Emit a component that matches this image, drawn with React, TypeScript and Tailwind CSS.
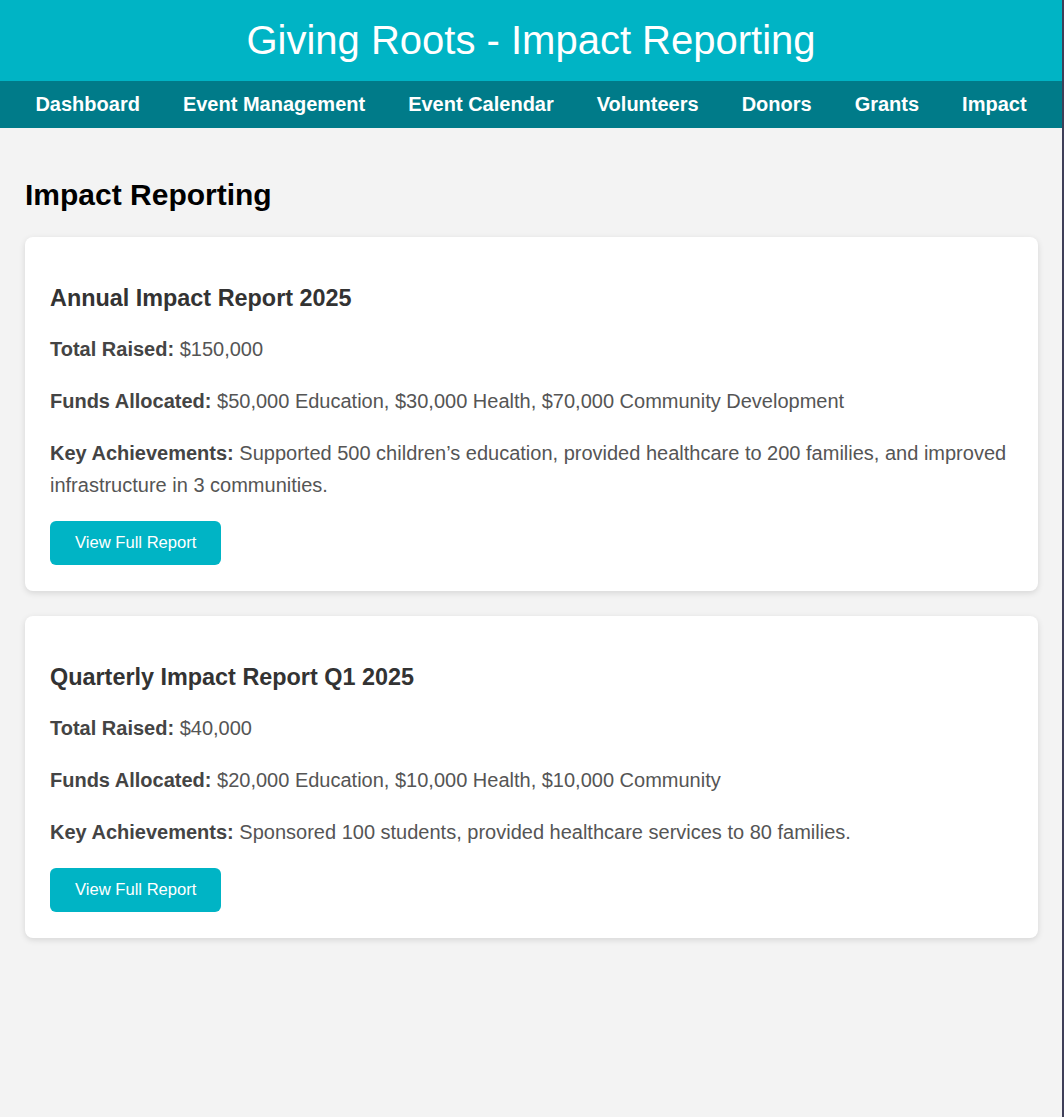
import React from "react";

const navItems = ["Dashboard", "Event Management", "Event Calendar", "Volunteers", "Donors", "Grants", "Impact"];

type Report = {
  title: string;
  raised: string;
  funds: string;
  achievements: string;
};

const reports: Report[] = [
  {
    title: "Annual Impact Report 2025",
    raised: "$150,000",
    funds: "$50,000 Education, $30,000 Health, $70,000 Community Development",
    achievements:
      "Supported 500 children\u2019s education, provided healthcare to 200 families, and improved infrastructure in 3 communities.",
  },
  {
    title: "Quarterly Impact Report Q1 2025",
    raised: "$40,000",
    funds: "$20,000 Education, $10,000 Health, $10,000 Community",
    achievements: "Sponsored 100 students, provided healthcare services to 80 families.",
  },
];

function ReportCard({ r }: { r: Report }) {
  return (
    <div className="bg-white rounded-[8px] shadow-[0_2px_6px_rgba(0,0,0,0.12)] px-[25px] pt-[43px] pb-[26px]">
      <h3 className="text-[23.4px] leading-[37px] font-bold text-[#333333]">{r.title}</h3>
      <div className="mt-[16px] flex flex-col gap-[20px] text-[20px] leading-[32px] text-[#555555]">
        <p>
          <strong className="text-[#444444]">Total Raised:</strong>
          <span> {r.raised}</span>
        </p>
        <p>
          <strong className="text-[#444444]">Funds Allocated:</strong>
          <span> {r.funds}</span>
        </p>
        <p>
          <strong className="text-[#444444]">Key Achievements:</strong>
          <span> {r.achievements}</span>
        </p>
      </div>
      <button className="mt-[20px] h-[44px] px-[25px] rounded-[6px] bg-[#00b4c5] text-white text-[16.6px] leading-none">
        View Full Report
      </button>
    </div>
  );
}

export default function App() {
  return (
    <div
      className="min-h-screen bg-[#f3f3f3] border-r-2 border-[#3f3f58]"
      style={{ fontFamily: '"Liberation Sans", Arial, sans-serif' }}
    >
      <header className="h-[81px] bg-[#00b4c5] flex items-center justify-center pb-[2px]">
        <h1 className="text-[40px] leading-none text-white font-normal">Giving Roots - Impact Reporting</h1>
      </header>
      <nav className="h-[47px] bg-[#007b89] flex items-center justify-center gap-[43px] pb-[2px]">
        {navItems.map((n) => (
          <a key={n} className="text-white font-bold text-[20px] leading-none cursor-pointer">
            {n}
          </a>
        ))}
      </nav>
      <main className="px-[25px] pb-[40px]">
        <h2 className="mt-[52px] mb-[27px] text-[30px] leading-[30px] font-bold text-black">Impact Reporting</h2>
        <div className="flex flex-col gap-[25px] mr-[-1px]">
          {reports.map((r) => (
            <ReportCard key={r.title} r={r} />
          ))}
        </div>
      </main>
    </div>
  );
}
